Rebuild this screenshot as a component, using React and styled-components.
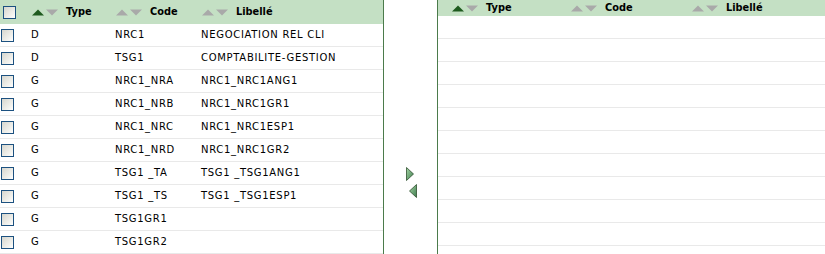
import React from "react";
import styled, { createGlobalStyle } from "styled-components";

const Global = createGlobalStyle`
  html, body { margin: 0; padding: 0; background: #fff; }
  body { font-family: "DejaVu Sans", Verdana, sans-serif; color: #000; }
`;

const Page = styled.div`
  display: flex;
  width: 825px;
  height: 254px;
  overflow: hidden;
  background: #fff;
`;

const Panel = styled.div`
  flex: ${(p) => (p.$grow ? "1 1 auto" : "0 0 auto")};
  width: ${(p) => (p.$width ? `${p.$width}px` : "auto")};
  border-left: ${(p) => (p.$borderLeft ? "1px solid #4b7b4b" : "none")};
  border-right: ${(p) => (p.$borderRight ? "1px solid #4b7b4b" : "none")};
  display: flex;
  flex-direction: column;
  overflow: hidden;
`;

const HeaderRow = styled.div`
  display: grid;
  grid-template-columns: ${(p) => p.$cols};
  height: ${(p) => p.$height}px;
  background: #c4e0c4;
  align-items: center;
`;

const HeaderCell = styled.div`
  display: flex;
  align-items: center;
  gap: 7px;
  padding-left: 4px;
  font-weight: bold;
  font-size: 9.8px;
  line-height: 12px;
  white-space: nowrap;
`;

const CheckCell = styled.div`
  display: flex;
  align-items: center;
  padding-left: ${(p) => p.$pad}px;
`;

const DataRow = styled.div`
  display: grid;
  grid-template-columns: ${(p) => p.$cols};
  height: 23px;
  box-sizing: border-box;
  border-bottom: 1px solid #e9e9e9;
  align-items: center;
  flex: 0 0 auto;
`;

const DataCell = styled.div`
  padding-left: 3px;
  font-size: 10px;
  line-height: 14px;
  letter-spacing: 0.7px;
  white-space: nowrap;
`;

const Box = styled.span`
  display: block;
  width: 13px;
  height: 13px;
  box-sizing: border-box;
  border: 1px solid #1c5180;
  background: linear-gradient(135deg, #d6d6ce 0%, #f2f2ee 70%, #ffffff 100%);
`;

const Middle = styled.div`
  flex: 0 0 53px;
  display: flex;
  flex-direction: column;
  align-items: flex-start;
  padding-top: 167px;
  padding-left: 22px;
  box-sizing: border-box;
  gap: 3px;
`;

const ArrowBtn = styled.svg`
  display: block;
  margin-left: ${(p) => p.$shift || 0}px;
`;

function SortIcon({ active }) {
  return (
    <svg width="27" height="7" viewBox="0 0 27 7">
      <polygon points="0,6.5 6,0.5 12,6.5" fill={active ? "#1e5a1e" : "#a9a9a9"} />
      <polygon points="14,0.5 26,0.5 20,6.5" fill="#a9a9a9" />
    </svg>
  );
}

function Header({ cols, height, withCheck, checkPad }) {
  return (
    <HeaderRow $cols={cols} $height={height}>
      {withCheck ? (
        <CheckCell $pad={checkPad}>
          <Box />
        </CheckCell>
      ) : (
        <div />
      )}
      <HeaderCell>
        <SortIcon active />
        Type
      </HeaderCell>
      <HeaderCell>
        <SortIcon />
        Code
      </HeaderCell>
      <HeaderCell>
        <SortIcon />
        Libellé
      </HeaderCell>
    </HeaderRow>
  );
}

const rows = [
  ["D", "NRC1", "NEGOCIATION REL CLI"],
  ["D", "TSG1", "COMPTABILITE-GESTION"],
  ["G", "NRC1_NRA", "NRC1_NRC1ANG1"],
  ["G", "NRC1_NRB", "NRC1_NRC1GR1"],
  ["G", "NRC1_NRC", "NRC1_NRC1ESP1"],
  ["G", "NRC1_NRD", "NRC1_NRC1GR2"],
  ["G", "TSG1 _TA", "TSG1 _TSG1ANG1"],
  ["G", "TSG1 _TS", "TSG1 _TSG1ESP1"],
  ["G", "TSG1GR1", ""],
  ["G", "TSG1GR2", ""],
];

const LEFT_COLS = "28px 84px 86px 1fr";
const RIGHT_COLS = "10px 119px 121px 1fr";

export default function App() {
  return (
    <>
      <Global />
      <Page>
        <Panel $width={383} $borderRight>
          <Header cols={LEFT_COLS} height={24} withCheck checkPad={3} />
          {rows.map((r, i) => (
            <DataRow key={i} $cols={LEFT_COLS}>
              <CheckCell $pad={1}>
                <Box />
              </CheckCell>
              <DataCell>{r[0]}</DataCell>
              <DataCell>{r[1]}</DataCell>
              <DataCell>{r[2]}</DataCell>
            </DataRow>
          ))}
        </Panel>
        <Middle>
          <ArrowBtn width="8" height="14" viewBox="0 0 8 14">
            <defs>
              <linearGradient id="gr" x1="0" y1="0" x2="1" y2="1">
                <stop offset="0" stopColor="#a6d6a6" />
                <stop offset="1" stopColor="#3d7a4d" />
              </linearGradient>
            </defs>
            <polygon points="0.5,0.5 7.5,7 0.5,13.5" fill="url(#gr)" stroke="#2f4f2f" strokeWidth="0.8" />
          </ArrowBtn>
          <ArrowBtn $shift={3} width="8" height="14" viewBox="0 0 8 14">
            <defs>
              <linearGradient id="gl" x1="0" y1="0" x2="1" y2="1">
                <stop offset="0" stopColor="#a6d6a6" />
                <stop offset="1" stopColor="#3d7a4d" />
              </linearGradient>
            </defs>
            <polygon points="7.5,0.5 0.5,7 7.5,13.5" fill="url(#gl)" stroke="#2f4f2f" strokeWidth="0.8" />
          </ArrowBtn>
        </Middle>
        <Panel $grow $borderLeft>
          <Header cols={RIGHT_COLS} height={16} />
          {Array.from({ length: 10 }).map((_, i) => (
            <DataRow key={i} $cols={RIGHT_COLS} />
          ))}
        </Panel>
      </Page>
    </>
  );
}
